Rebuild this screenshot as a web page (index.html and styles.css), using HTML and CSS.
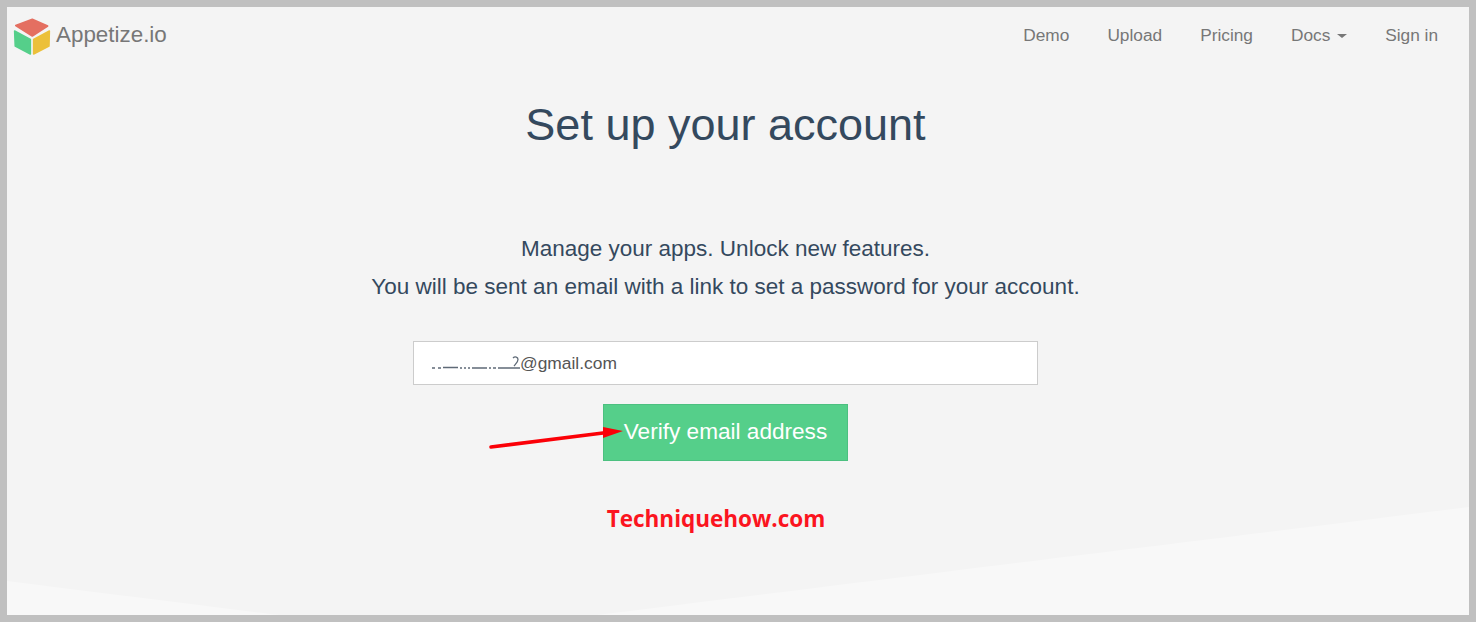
FILE: index.html
```html
<!DOCTYPE html>
<html lang="en">

<head>
    <meta charset="UTF-8" />
    <title>Appetize.io</title>
    <link rel="stylesheet" href="styles.css">
</head>

<body>
    <div class="page">
        <nav class="navbar">
            <a class="brand" href="#">
                <svg class="brand-logo" width="38" height="38" viewBox="0 0 38 38">
                    <path d="M19.3 1.3 L34.7 8 L19.3 18 L2.7 7.5 Z" fill="#e46f61" stroke="#e46f61" stroke-width="1.5" stroke-linejoin="round" />
                    <path d="M1.6 13 L17.4 21.5 L17.4 36 L2.2 28 Z" fill="#55cf8a" stroke="#55cf8a" stroke-width="1.5" stroke-linejoin="round" />
                    <path d="M36.4 13 L20.6 21.5 L20.6 36 L36 28 Z" fill="#ecc03a" stroke="#ecc03a" stroke-width="1.5" stroke-linejoin="round" />
                </svg>
                Appetize.io
            </a>
            <ul class="nav-links">
                <li><a class="nav-link" href="#">Demo</a></li>
                <li><a class="nav-link" href="#">Upload</a></li>
                <li><a class="nav-link" href="#">Pricing</a></li>
                <li><a class="nav-link" href="#">Docs <span class="caret"></span></a></li>
                <li><a class="nav-link" href="#">Sign in</a></li>
            </ul>
        </nav>

        <main class="center-content">
            <h1 class="title">Set up your account</h1>
            <p class="subtext">Manage your apps. Unlock new features.</p>
            <p class="subtext">You will be sent an email with a link to set a password for your account.</p>

            <div class="email-box">
                <svg class="smudge" width="88" height="20" viewBox="0 0 88 20">
                    <path d="M0 15h3M6 15h3M11 14.5h15M28 15h2M32 15h2M36 15h2M40 15h15M57 15h2M61 15h3M66 15h22" stroke="#5f6a77" stroke-width="1.3" fill="none" />
                    <path d="M81 5c2-2 5-1 5 1.500s-2 4-4 6.500" stroke="#5f6a77" stroke-width="1.3" fill="none" />
                </svg>
                <span>@gmail.com</span>
            </div>

            <a class="btn" href="#">Verify email address</a>

            <div class="watermark">Techniquehow.com</div>
        </main>

        <svg class="arrow" width="140" height="30" viewBox="0 0 140 30">
            <path d="M3 25 L115 11" stroke="#fb0007" stroke-width="3.5" stroke-linecap="round" fill="none" />
            <path d="M115 5 L135 9 L115 16 Z" fill="#fb0007" />
        </svg>
    </div>
</body>

</html>
```

FILE: styles.css
```css
* {
    margin: 0;
    padding: 0;
    box-sizing: border-box;
}

body {
    font-family: 'Liberation Sans', Arial, sans-serif;
    background: #c0c0c0;
    padding: 7px;
    height: 622px;
    overflow: hidden;
}

.page {
    position: relative;
    height: 608px;
    background: #f4f4f4;
    padding-right: 25px;
    overflow: hidden;
}

/* pale wedges along the bottom */
.page::before,
.page::after {
    content: '';
    position: absolute;
    bottom: 0;
    background: #f8f8f8;
}

.page::before {
    left: 0;
    width: 272px;
    height: 34px;
    clip-path: polygon(0 0, 100% 100%, 0 100%);
}

.page::after {
    right: 0;
    width: 872px;
    height: 108px;
    clip-path: polygon(100% 0, 100% 100%, 0 100%);
}

/* Navigation */
.navbar {
    display: flex;
    align-items: center;
    justify-content: space-between;
    height: 55px;
    padding-right: 6px;
    position: relative;
    z-index: 1;
}

.brand {
    display: flex;
    align-items: center;
    gap: 5px;
    padding-left: 6px;
    font-size: 22.4px;
    color: #777777;
    text-decoration: none;
}

.brand-logo {
    margin-top: 4px;
}

.nav-links {
    display: flex;
    gap: 38px;
    list-style: none;
    padding-top: 2px;
}

.nav-link {
    font-size: 17.3px;
    color: #777777;
    text-decoration: none;
}

.caret {
    display: inline-block;
    width: 0;
    height: 0;
    margin-left: 2px;
    vertical-align: middle;
    border-top: 4px solid #777777;
    border-left: 5px solid transparent;
    border-right: 5px solid transparent;
}

/* Form column */
.center-content {
    display: flex;
    flex-direction: column;
    align-items: center;
    position: relative;
    z-index: 1;
}

.title {
    font-size: 45px;
    font-weight: 400;
    line-height: 52px;
    color: #34495e;
    margin-top: 37px;
    margin-bottom: 79px;
}

.subtext {
    font-size: 22.5px;
    line-height: 38px;
    color: #34495e;
}

.email-box {
    display: flex;
    align-items: center;
    width: 625px;
    height: 44px;
    margin-top: 35px;
    padding-left: 18px;
    background: #ffffff;
    border: 1px solid #cccccc;
    font-size: 17.4px;
    color: #555555;
}

.btn {
    display: flex;
    align-items: center;
    justify-content: center;
    width: 245px;
    height: 57px;
    margin-top: 19px;
    padding-bottom: 2px;
    background: #55cf8a;
    border: 1px solid #4cc080;
    color: #ffffff;
    font-size: 22.6px;
    text-decoration: none;
}

.watermark {
    margin-top: 42px;
    margin-right: 19px;
    font-family: 'Open Sans', sans-serif;
    font-weight: 700;
    font-size: 22.5px;
    color: #fb1420;
}

.arrow {
    position: absolute;
    left: 481px;
    top: 415px;
    z-index: 2;
}
```
